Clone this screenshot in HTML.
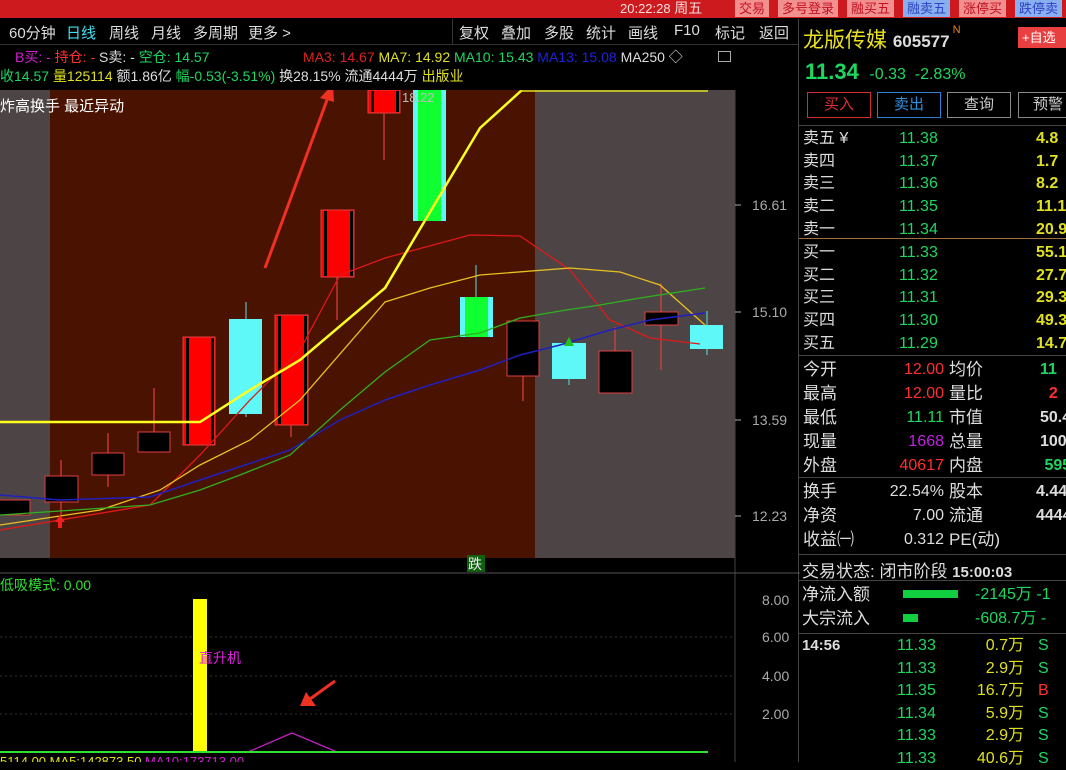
<!DOCTYPE html>
<html><head><meta charset="utf-8"><style>
*{margin:0;padding:0;box-sizing:border-box}
body{width:1066px;height:762px;background:#000;overflow:hidden;position:relative;font-family:"Liberation Sans","Noto Sans CJK SC",sans-serif;color:#ddd}
.a{position:absolute;white-space:nowrap}
.tb{font-size:15px;color:#ddd;top:22px}
.btn{position:absolute;top:0;height:17px;font-size:13px;padding:0 4px;color:#c01020;background:#f29090;line-height:17px}
.r{font-size:16px}
.g{color:#1ed760}.y{color:#e0e020}.w{color:#ddd}.rd{color:#ff3030}
</style></head><body>
<div class="a" style="left:0;top:0;width:1066px;height:18px;background:#cc1a1e"></div>
<div class="a" style="left:620px;top:-2px;font-size:13px;color:#f8e0e0">20:22:28 <span style="font-size:14px">周五</span></div>
<div class="btn" style="left:735px">交易</div>
<div class="btn" style="left:778px">多号登录</div>
<div class="btn" style="left:847px">融买五</div>
<div class="btn" style="left:903px;background:#88b0f0;color:#3040c0">融卖五</div>
<div class="btn" style="left:959px">涨停买</div>
<div class="btn" style="left:1015px;background:#88b0f0;color:#3040c0">跌停卖</div>
<!-- toolbar -->
<div class="a" style="left:0;top:19px;width:798px;height:26px;border-bottom:1px solid #333"></div>
<div class="a tb" style="left:9px">60分钟</div>
<div class="a tb" style="left:66px;color:#40e0f0">日线</div>
<div class="a tb" style="left:109px">周线</div>
<div class="a tb" style="left:151px">月线</div>
<div class="a tb" style="left:193px">多周期</div>
<div class="a tb" style="left:248px">更多 &gt;</div>
<div class="a" style="left:452px;top:19px;height:26px;width:346px;border-left:1px solid #333"></div>
<div class="a tb" style="left:459px">复权</div><div class="a tb" style="left:501px">叠加</div><div class="a tb" style="left:544px">多股</div><div class="a tb" style="left:586px">统计</div><div class="a tb" style="left:628px">画线</div><div class="a tb" style="left:674px">F10</div><div class="a tb" style="left:715px">标记</div><div class="a tb" style="left:759px">返回</div>
<div class="a" style="left:798px;top:19px;width:1px;height:743px;background:#444"></div>
<!-- info lines -->
<div class="a" style="left:15px;top:47px;font-size:14px"><span style="color:#d020d0">B买: -</span> <span class="rd">持仓: -</span> <span class="w">S卖: -</span> <span class="g">空仓: 14.57</span></div>
<div class="a" style="left:303px;top:47px;font-size:14px"><span style="color:#e02020">MA3: 14.67</span> <span class="y">MA7: 14.92</span> <span class="g">MA10: 15.43</span> <span style="color:#2020e0">MA13: 15.08</span> <span class="w">MA250 ◇</span></div>
<div class="a" style="left:718px;top:51px;width:13px;height:11px;border:1px solid #aaa"></div>
<div class="a" style="left:0;top:66px;font-size:14px"><span class="g">收14.57</span> <span class="y">量125114</span> <span class="w">额1.86亿</span> <span class="g">幅-0.53(-3.51%)</span> <span class="w">换28.15% 流通4444万</span> <span class="y">出版业</span></div>
<!-- chart -->
<svg class="a" style="left:0;top:90px" width="800" height="672" viewBox="0 90 800 672">
<rect x="0" y="90" width="50" height="468" fill="#4d4545"/>
<rect x="50" y="90" width="485" height="468" fill="#4a1200"/>
<rect x="535" y="90" width="200" height="468" fill="#4d4545"/>
<line x1="735" y1="90" x2="735" y2="762" stroke="#444"/>
<line x1="0" y1="573" x2="800" y2="573" stroke="#555"/>
<g stroke="#aaa"><line x1="735" y1="205" x2="741" y2="205"/><line x1="735" y1="312" x2="741" y2="312"/><line x1="735" y1="420" x2="741" y2="420"/><line x1="735" y1="516" x2="741" y2="516"/></g>
<g font-size="14" fill="#aaa"><text x="752" y="210">16.61</text><text x="752" y="317">15.10</text><text x="752" y="425">13.59</text><text x="752" y="521">12.23</text>
<text x="762" y="605">8.00</text><text x="762" y="642">6.00</text><text x="762" y="681">4.00</text><text x="762" y="719">2.00</text></g>
<!-- wicks -->
<g stroke="#e04040" stroke-width="1.2">
<line x1="61" y1="460" x2="61" y2="515"/><line x1="108" y1="433" x2="108" y2="487"/><line x1="154" y1="388" x2="154" y2="452"/>
<line x1="291" y1="425" x2="291" y2="437"/><line x1="337" y1="277" x2="337" y2="320"/><line x1="384" y1="113" x2="384" y2="160"/>
<line x1="523" y1="376" x2="523" y2="401"/><line x1="615" y1="327" x2="615" y2="351"/><line x1="661" y1="283" x2="661" y2="370"/>
</g>
<g stroke="#60e0e0"><line x1="246" y1="302" x2="246" y2="417"/><line x1="476" y1="265" x2="476" y2="297"/><line x1="569" y1="379" x2="569" y2="385"/><line x1="707" y1="311" x2="707" y2="355"/></g>
<!-- bodies -->
<g stroke="#e04040" stroke-width="1">
<rect x="-2" y="500" width="32" height="15" fill="#000"/>
<rect x="45" y="476" width="33" height="26" fill="#000"/>
<rect x="92" y="453" width="32" height="22" fill="#000"/>
<rect x="138" y="432" width="32" height="20" fill="#000"/>
<rect x="183" y="337" width="32" height="108" fill="#ff0000"/>
<rect x="275" y="315" width="33" height="110" fill="#ff0000"/>
<rect x="321" y="210" width="33" height="67" fill="#ff0000"/>
<rect x="368" y="90" width="32" height="23" fill="#ff0000"/>
<rect x="507" y="321" width="32" height="55" fill="#000"/>
<rect x="599" y="351" width="33" height="42" fill="#000"/>
<rect x="645" y="312" width="33" height="13" fill="#000"/>
</g>
<g fill="#000"><rect x="186" y="338" width="3" height="106"/><rect x="211" y="338" width="3" height="106"/><rect x="278" y="316" width="3" height="108"/><rect x="304" y="316" width="3" height="108"/><rect x="324" y="211" width="3" height="65"/><rect x="350" y="211" width="3" height="65"/><rect x="371" y="91" width="3" height="21"/><rect x="396" y="91" width="3" height="21"/></g>
<rect x="229" y="319" width="33" height="95" fill="#5ff8f8"/>
<rect x="413" y="90" width="33" height="131" fill="#5ff8f8"/><rect x="418" y="90" width="23" height="131" fill="#10ff30"/>
<rect x="460" y="297" width="33" height="40" fill="#5ff8f8"/><rect x="465" y="297" width="23" height="40" fill="#10ff30"/>
<rect x="552" y="343" width="34" height="36" fill="#5ff8f8"/>
<rect x="690" y="325" width="33" height="24" fill="#5ff8f8"/>
<text x="402" y="102" font-size="13" fill="#bbb">18.22</text>
<!-- MAs -->
<g fill="none">
<polyline stroke="#e01818" stroke-width="1.3" points="0,530 150,505 200,455 250,400 300,350 340,275 385,258 470,235 520,236 570,270 610,320 650,338 700,344"/>
<polyline stroke="#e8c020" stroke-width="1.3" points="0,525 100,510 160,490 200,465 250,440 300,400 385,302 430,288 480,275 570,268 620,272 660,285 705,325"/>
<polyline stroke="#30b020" stroke-width="1.3" points="0,515 150,505 200,490 240,475 290,455 340,410 385,372 430,340 480,333 520,318 560,311 600,305 640,298 705,288"/>
<polyline stroke="#2020c0" stroke-width="1.5" points="0,495 60,500 150,497 200,480 290,450 340,420 385,400 430,385 480,370 520,355 560,345 610,330 650,320 705,313"/>
<polyline stroke="#ffff20" stroke-width="2.5" points="0,422 200,422 250,390 300,360 385,288 430,212 480,128 522,90"/>
<line x1="520" y1="91" x2="708" y2="91" stroke="#e0e020" stroke-width="1.5"/>
</g>
<polygon points="60,515 65,522 62,522 62,528 58,528 58,522 55,522" fill="#f02020"/>
<polygon points="569,337 574,346 564,346" fill="#20c020"/>
<!-- red arrows -->
<line x1="265" y1="268" x2="327" y2="100" stroke="#f03020" stroke-width="3"/>
<polygon points="333,84 320,98 334,102" fill="#f03020"/>
<line x1="335" y1="681" x2="310" y2="699" stroke="#f03020" stroke-width="3"/>
<polygon points="300,706 316,706 306,692" fill="#f03020"/>
<!-- lower panel -->
<rect x="467" y="555" width="18" height="17" fill="#106010"/>
<text x="468" y="569" font-size="14" fill="#eee">跌</text>
<text x="0" y="590" font-size="14" fill="#30e030">低吸模式: 0.00</text>
<g stroke="#333" stroke-dasharray="2,3"><line x1="0" y1="637" x2="735" y2="637"/><line x1="0" y1="676" x2="735" y2="676"/><line x1="0" y1="714" x2="735" y2="714"/></g>
<rect x="193" y="599" width="14" height="153" fill="#ffff00"/>
<text x="199" y="663" font-size="14" fill="#e020e0">直升机</text>
<polyline points="248,752 292,733 337,752" fill="none" stroke="#c020c0" stroke-width="1.3"/>
<line x1="0" y1="752" x2="708" y2="752" stroke="#30e030" stroke-width="2"/>
<text x="0" y="766" font-size="13" fill="#e0e020">5114.00 MA5:142873.50 <tspan fill="#d020d0">MA10:173713.00</tspan></text>
</svg>
<!-- right panel -->
<div class="a" style="left:803px;top:24px;font-size:21px;color:#e8e020">龙版传媒 <span style="font-size:17px;color:#ddd;font-weight:bold">605577</span><span style="font-size:11px;color:#f08020;vertical-align:top"> N</span></div>
<div class="a" style="left:1018px;top:27px;width:48px;height:21px;background:#e84040;color:#fff;font-size:13px;line-height:21px;padding-left:4px">+自选</div>
<div class="a g" style="left:805px;top:59px;font-size:22px;font-weight:bold">11.34 <span style="font-size:16px;font-weight:normal">&nbsp;-0.33 &nbsp;-2.83%</span></div>
<div class="a" style="left:807px;top:92px;width:64px;height:26px;border:1px solid #d03030;color:#e03030;font-size:15px;text-align:center;line-height:24px">买入</div>
<div class="a" style="left:877px;top:92px;width:64px;height:26px;border:1px solid #3080d0;color:#3090e0;font-size:15px;text-align:center;line-height:24px">卖出</div>
<div class="a" style="left:947px;top:92px;width:64px;height:26px;border:1px solid #888;color:#ccc;font-size:15px;text-align:center;line-height:24px">查询</div>
<div class="a" style="left:1018px;top:92px;width:60px;height:26px;border:1px solid #888;color:#ccc;font-size:15px;text-align:center;line-height:24px">预警</div>
<div class="a" style="left:799px;top:125px;width:267px;height:1px;background:#444"></div>
<div class="a r" style="left:803px;top:128px;line-height:22.7px">卖五 ¥<br>卖四<br>卖三<br>卖二<br>卖一</div>
<div class="a r g" style="left:899px;top:128px;line-height:22.7px">11.38<br>11.37<br>11.36<br>11.35<br>11.34</div>
<div class="a r y" style="left:1036px;top:128px;line-height:22.7px;font-weight:bold">4.8<br>1.7<br>8.2<br>11.1<br>20.9</div>
<div class="a" style="left:799px;top:238px;width:267px;height:1px;background:#a07040"></div>
<div class="a r" style="left:803px;top:242px;line-height:22.7px">买一<br>买二<br>买三<br>买四<br>买五</div>
<div class="a r g" style="left:899px;top:242px;line-height:22.7px">11.33<br>11.32<br>11.31<br>11.30<br>11.29</div>
<div class="a r y" style="left:1036px;top:242px;line-height:22.7px;font-weight:bold">55.1<br>27.7<br>29.3<br>49.3<br>14.7</div>
<div class="a" style="left:799px;top:355px;width:267px;height:1px;background:#444"></div>
<div class="a r" style="left:803px;top:358px;line-height:24px;font-size:17px">今开<br>最高<br>最低<br>现量<br>外盘</div>
<div class="a r" style="left:898px;top:358px;line-height:24px;text-align:right;width:46px"><span class="rd">12.00</span><br><span class="rd">12.00</span><br><span class="g">11.11</span><br><span style="color:#c020e0">1668</span><br><span class="rd">40617</span></div>
<div class="a r" style="left:949px;top:358px;line-height:24px;font-size:17px">均价<br>量比<br>市值<br>总量<br>内盘</div>
<div class="a r" style="left:1040px;top:358px;line-height:24px;font-weight:bold"><span class="g">11</span><br><span class="rd">&nbsp;&nbsp;2</span><br><span class="w">50.4</span><br><span class="w">1001</span><br><span class="g">&nbsp;595</span></div>
<div class="a" style="left:799px;top:477px;width:267px;height:1px;background:#444"></div>
<div class="a r" style="left:803px;top:480px;line-height:24px;font-size:17px">换手<br>净资<br>收益㈠</div>
<div class="a r w" style="left:880px;top:480px;line-height:24px;text-align:right;width:64px">22.54%<br>7.00<br>0.312</div>
<div class="a r" style="left:949px;top:480px;line-height:24px;font-size:17px">股本<br>流通<br>PE(动)</div>
<div class="a r w" style="left:1036px;top:480px;line-height:24px;font-weight:bold">4.44<br>4444</div>
<div class="a" style="left:799px;top:554px;width:267px;height:1px;background:#444"></div>
<div class="a" style="left:802px;top:557px;font-size:17px">交易状态: 闭市阶段 <span style="font-size:15px;font-weight:bold">15:00:03</span></div>
<div class="a" style="left:799px;top:580px;width:267px;height:1px;background:#444"></div>
<div class="a" style="left:802px;top:583px;font-size:17px;line-height:24px">净流入额<br>大宗流入</div>
<div class="a" style="left:903px;top:590px;width:55px;height:8px;background:#10d040"></div>
<div class="a" style="left:903px;top:614px;width:15px;height:8px;background:#10d040"></div>
<div class="a g" style="left:975px;top:583px;font-size:16px;line-height:24px">-2145万 -1<br>-608.7万 -</div>
<div class="a" style="left:799px;top:633px;width:267px;height:1px;background:#444"></div>
<div class="a w" style="left:802px;top:637px;font-size:15px;font-weight:bold">14:56</div>
<div class="a r g" style="left:897px;top:635px;line-height:22.5px">11.33<br>11.33<br>11.35<br>11.34<br>11.33<br>11.33</div>
<div class="a r y" style="left:968px;top:635px;line-height:22.5px;text-align:right;width:56px">0.7万<br>2.9万<br>16.7万<br>5.9万<br>2.9万<br>40.6万</div>
<div class="a r" style="left:1038px;top:635px;line-height:22.5px"><span class="g">S</span><br><span class="g">S</span><br><span class="rd">B</span><br><span class="g">S</span><br><span class="g">S</span><br><span class="g">S</span></div>
<div class="a" style="left:0;top:95px;font-size:15px;color:#fff">炸高换手 最近异动</div>
</body></html>
